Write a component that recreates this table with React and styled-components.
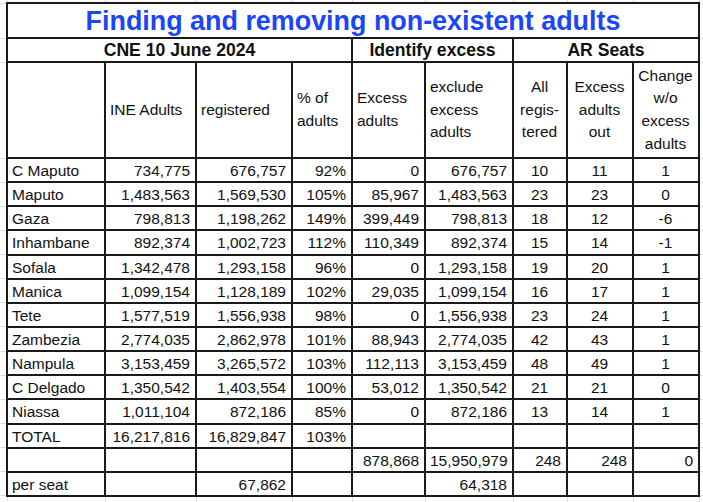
import styled, { createGlobalStyle } from 'styled-components';

const GlobalStyle = createGlobalStyle`
  html, body {
    margin: 0;
    padding: 0;
    background: #fff;
  }
  body {
    font-family: "Liberation Sans", Arial, Helvetica, sans-serif;
    color: #111;
  }
`;

const widths = [7, 98, 91, 96, 60, 73, 88, 54, 66, 66, 4];

const Sheet = styled.table`
  border-collapse: collapse;
  table-layout: fixed;
  width: 703px;
  font-size: 15.5px;
`;

const Gutter = styled.td`
  box-sizing: border-box;
  padding: 0;
  height: ${(p) => p.$h}px;
  border: none;
  ${(p) => (p.$vertical ? 'border-left: 1px solid #dcdcdc; border-right: 1px solid #dcdcdc;' : '')}
  ${(p) => (p.$horizontal ? 'border-top: 1px solid #dcdcdc; border-bottom: 1px solid #dcdcdc;' : '')}
`;

const Cell = styled.td`
  box-sizing: border-box;
  height: ${(p) => p.$h || 24.15}px;
  border: 2px solid #1a1a1a;
  padding: 2px 5px 0 4px;
  text-align: ${(p) => p.$align || 'left'};
  vertical-align: middle;
  white-space: nowrap;
  overflow: hidden;
  line-height: 18px;
`;

const Title = styled(Cell)`
  color: #1b46f5;
  font-size: 26.9px;
  font-weight: bold;
  text-align: center;
  line-height: 30px;
  padding: 0;
`;

const Group = styled(Cell)`
  font-size: 17.6px;
  font-weight: bold;
  text-align: center;
  padding: 0;
`;

const Label = styled(Cell)`
  line-height: 22.6px;
  padding: 0 5px 0 4px;
  text-align: ${(p) => p.$align || 'left'};
`;

const rows = [
  ['C Maputo', '734,775', '676,757', '92%', '0', '676,757', '10', '11', '1'],
  ['Maputo', '1,483,563', '1,569,530', '105%', '85,967', '1,483,563', '23', '23', '0'],
  ['Gaza', '798,813', '1,198,262', '149%', '399,449', '798,813', '18', '12', '-6'],
  ['Inhambane', '892,374', '1,002,723', '112%', '110,349', '892,374', '15', '14', '-1'],
  ['Sofala', '1,342,478', '1,293,158', '96%', '0', '1,293,158', '19', '20', '1'],
  ['Manica', '1,099,154', '1,128,189', '102%', '29,035', '1,099,154', '16', '17', '1'],
  ['Tete', '1,577,519', '1,556,938', '98%', '0', '1,556,938', '23', '24', '1'],
  ['Zambezia', '2,774,035', '2,862,978', '101%', '88,943', '2,774,035', '42', '43', '1'],
  ['Nampula', '3,153,459', '3,265,572', '103%', '112,113', '3,153,459', '48', '49', '1'],
  ['C Delgado', '1,350,542', '1,403,554', '100%', '53,012', '1,350,542', '21', '21', '0'],
  ['Niassa', '1,011,104', '872,186', '85%', '0', '872,186', '13', '14', '1'],
  ['TOTAL', '16,217,816', '16,829,847', '103%', '', '', '', '', ''],
  ['', '', '', '', '878,868', '15,950,979', '248', '248', '0', 'right'],
  ['per seat', '', '67,862', '', '', '64,318', '', '', ''],
];

const labels = [
  ['', 'left'],
  ['INE Adults', 'left'],
  ['registered', 'left'],
  ['% of\nadults', 'left'],
  ['Excess\nadults', 'left'],
  ['exclude\nexcess\nadults', 'left'],
  ['All\nregis-\ntered', 'center'],
  ['Excess\nadults\nout', 'center'],
  ['Change\nw/o\nexcess\nadults', 'center'],
];

const alignFor = (i, seatAlign) => {
  if (i === 0) return 'left';
  if (i >= 6) return seatAlign || 'center';
  return 'right';
};

const Side = ({ h }) => <Gutter $h={h} $horizontal />;

const EdgeRow = ({ h }) => (
  <tr>
    <Gutter $h={h} />
    {widths.slice(1, -1).map((_, i) => (
      <Gutter key={i} $h={h} $vertical />
    ))}
    <Gutter $h={h} />
  </tr>
);

export default function App() {
  return (
    <>
      <GlobalStyle />
      <Sheet>
        <colgroup>
          {widths.map((w, i) => (
            <col key={i} style={{ width: w }} />
          ))}
        </colgroup>
        <tbody>
          <EdgeRow h={3} />
          <tr>
            <Side h={35} />
            <Title colSpan={9} $h={35}>
              Finding and removing non-existent adults
            </Title>
            <Side h={35} />
          </tr>
          <tr>
            <Side h={24} />
            <Group colSpan={4} $h={24}>CNE 10 June 2024</Group>
            <Group colSpan={2} $h={24}>Identify excess</Group>
            <Group colSpan={3} $h={24}>AR Seats</Group>
            <Side h={24} />
          </tr>
          <tr>
            <Side h={96} />
            {labels.map(([text, align], i) => (
              <Label key={i} $h={96} $align={align}>
                {text.split('\n').map((line, j) => (
                  <div key={j}>{line}</div>
                ))}
              </Label>
            ))}
            <Side h={96} />
          </tr>
          {rows.map((row, r) => (
            <tr key={r}>
              <Side h={24.15} />
              {row.slice(0, 9).map((v, i) => (
                <Cell key={i} $align={alignFor(i, row[9])}>
                  {v}
                </Cell>
              ))}
              <Side h={24.15} />
            </tr>
          ))}
          <EdgeRow h={6} />
        </tbody>
      </Sheet>
    </>
  );
}
